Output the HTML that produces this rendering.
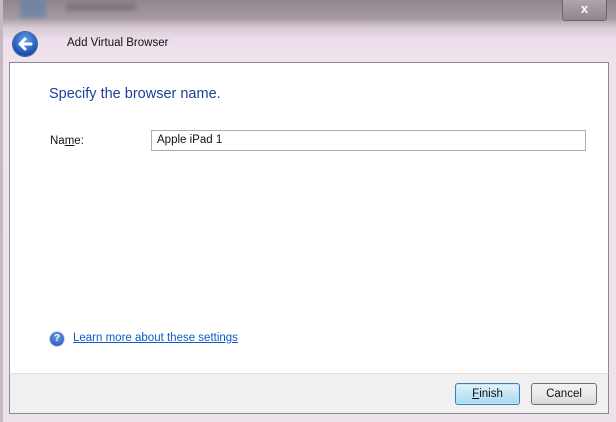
<!DOCTYPE html>
<html><head><style>
body{margin:0;width:616px;height:422px;overflow:hidden;font-family:"Liberation Sans",sans-serif;font-size:11.5px;position:relative;
background:linear-gradient(#8f858d 0px,#a59aa3 18px,#d9cbd6 28px,#ecdeea 40px,#efe3ee 60px,#eee2ec 100%);}
.abs{position:absolute}
</style></head><body>
<div class="abs" style="left:0;top:0;width:3px;height:422px;background:#c4bac2"></div>
<div class="abs" style="left:20px;top:0;width:26px;height:18px;background:#5a7fb0;opacity:.6;filter:blur(2px)"></div>
<div class="abs" style="left:66px;top:3px;width:70px;height:8px;background:#6b6068;opacity:.5;filter:blur(2px)"></div>
<div class="abs" style="left:562px;top:-2px;width:43px;height:21px;border:1px solid #6d6470;border-radius:3px;background:linear-gradient(#b0a6ae,#8f8590);color:#fff;font-weight:bold;text-align:center;line-height:20px;font-size:13px">x</div>
<div class="abs" style="left:13px;top:32px;width:24px;height:24px;border-radius:50%;background:radial-gradient(circle at 50% 35%,#6aa6ef,#1b4fb0 70%,#0d2f78);box-shadow:0 0 0 1px #3a5f9e"></div>
<svg class="abs" style="left:13px;top:32px" width="24" height="24" viewBox="0 0 24 24"><path d="M18 12H8M12 7l-5 5 5 5" stroke="#fff" stroke-width="3" fill="none" stroke-linecap="round" stroke-linejoin="round"/></svg>
<div class="abs" style="left:67px;top:37px;color:#111">Add Virtual Browser</div>
<div class="abs" style="left:9px;top:62px;width:598px;height:311px;background:#fff;border:1px solid #8e8794;border-bottom:none"></div>
<div class="abs" style="left:9px;top:373px;width:598px;height:39px;background:#f0f0f0;border:1px solid #8e8794;border-top:1px solid #dfdfdf"></div>
<div class="abs" style="left:49px;top:86px;font-size:14.5px;color:#1e3f9a">Specify the browser name.</div>
<div class="abs" style="left:50px;top:135px;color:#111">Na<u>m</u>e:</div>
<div class="abs" style="left:151px;top:130px;width:433px;height:19px;border:1px solid #abadb3;background:#fff;"><span style="position:absolute;left:5px;top:3px;color:#111">Apple iPad 1</span></div>
<div class="abs" style="left:50px;top:332px;width:14px;height:14px;border-radius:50%;background:radial-gradient(circle at 50% 35%,#6b9de8,#1d4fb0);box-shadow:0 0 0 1px #c9d6ef;color:#fff;font-size:10px;font-weight:bold;text-align:center;line-height:14px">?</div>
<div class="abs" style="left:73px;top:332px;color:#0b5bc9;text-decoration:underline">Learn more about these settings</div>
<div class="abs" style="left:455px;top:383px;width:63px;height:20px;border:1px solid #3c7fb1;border-radius:3px;background:linear-gradient(#e5f4fc,#c4e5f6 50%,#a7d9f5);box-shadow:inset 0 0 0 1px #bfe6fa;text-align:center;line-height:20px;color:#111"><u>F</u>inish</div>
<div class="abs" style="left:531px;top:383px;width:64px;height:20px;border:1px solid #707070;border-radius:3px;background:linear-gradient(#f2f2f2,#ebebeb 50%,#d6d6d6);text-align:center;line-height:20px;color:#111">Cancel</div>
</body></html>
